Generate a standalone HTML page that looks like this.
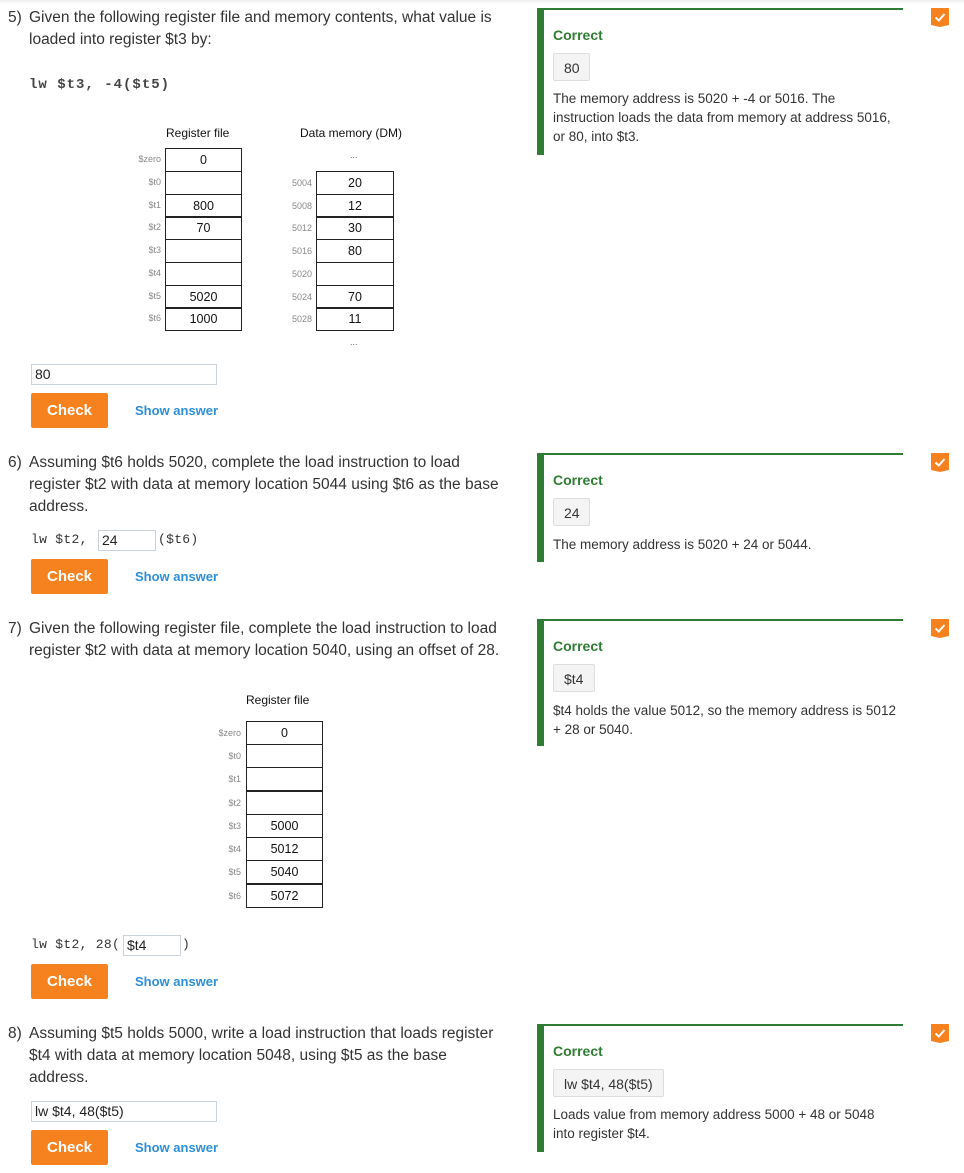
<!DOCTYPE html>
<html><head><meta charset="utf-8"><style>
body{margin:0;width:964px;height:1173px;position:relative;background:#fff;font-family:"Liberation Sans",sans-serif;color:#333;overflow:hidden}
.a{position:absolute;white-space:nowrap}
.q{font-size:15.5px;line-height:22px}
.mono{font-family:"Liberation Mono",monospace;font-size:13px;letter-spacing:0.3px;color:#333}
.inp{position:absolute;border:1px solid #c9d2d8;background:#fff;font-size:14px;line-height:18px;padding-left:3px;box-sizing:border-box;color:#222}
.btn{position:absolute;background:#f5811f;color:#fff;font-weight:bold;font-size:15px;text-align:center;border-radius:2px;width:77px;height:35px;line-height:35px}
.sa{position:absolute;color:#2d8fd6;font-weight:bold;font-size:13px}
.pan{position:absolute;left:537px;width:366px;border-top:2px solid #2e7d32;border-left:7px solid #2e7d32;box-sizing:border-box}
.cor{position:absolute;left:553px;color:#2e7d32;font-weight:bold;font-size:14px}
.box{position:absolute;left:553px;background:#f4f4f4;border:1px solid #ddd;border-radius:2px;height:28px;line-height:28px;font-size:14px;padding:0 10px;box-sizing:border-box;color:#333}
.ex{position:absolute;left:553px;font-size:13.5px;line-height:19px;white-space:nowrap}
.ic{position:absolute;left:931px;width:18px;height:19px}
.cell{position:absolute;border:1.5px solid #222;box-sizing:border-box;text-align:center;font-size:12.5px;color:#111}
.lbl{position:absolute;font-size:9px;color:#888;text-align:right;width:40px}
.lbl2{position:absolute;font-size:9px;color:#888}
.tt{position:absolute;font-size:12px;color:#111}
</style></head><body>
<div style="position:absolute;left:0;top:0;width:964px;height:4px;background:linear-gradient(#eee,#fff)"></div>

<!-- Q5 -->
<div class="a q" style="left:8px;top:7px">5)</div>
<div class="a q" style="left:29px;top:7px">Given the following register file and memory contents, what value is<br>loaded into register $t3 by:</div>
<div class="a mono" style="left:29px;top:77px;font-size:14px;letter-spacing:1px;font-weight:bold;color:#444">lw $t3, -4($t5)</div>
<div class="tt" style="left:166px;top:126px">Register file</div>
<div class="tt" style="left:300px;top:126px">Data memory (DM)</div>
<div class="tt" style="left:350px;top:150px;font-size:9px;color:#666">...</div>
<div class="tt" style="left:350px;top:337px;font-size:9px;color:#666">...</div>

<div class="cell" style="left:165px;top:148px;width:77px;height:24px;line-height:22px">0</div>
<div class="cell" style="left:165px;top:171px;width:77px;height:24px;line-height:22px"></div>
<div class="cell" style="left:165px;top:194px;width:77px;height:24px;line-height:22px">800</div>
<div class="cell" style="left:165px;top:216px;width:77px;height:24px;line-height:22px">70</div>
<div class="cell" style="left:165px;top:239px;width:77px;height:24px;line-height:22px"></div>
<div class="cell" style="left:165px;top:262px;width:77px;height:24px;line-height:22px"></div>
<div class="cell" style="left:165px;top:285px;width:77px;height:24px;line-height:22px">5020</div>
<div class="cell" style="left:165px;top:307px;width:77px;height:24px;line-height:22px">1000</div>
<div class="lbl" style="left:121px;top:154px">$zero</div>
<div class="lbl" style="left:121px;top:177px">$t0</div>
<div class="lbl" style="left:121px;top:200px">$t1</div>
<div class="lbl" style="left:121px;top:222px">$t2</div>
<div class="lbl" style="left:121px;top:245px">$t3</div>
<div class="lbl" style="left:121px;top:268px">$t4</div>
<div class="lbl" style="left:121px;top:291px">$t5</div>
<div class="lbl" style="left:121px;top:313px">$t6</div>

<div class="cell" style="left:316px;top:171px;width:78px;height:24px;line-height:22px">20</div>
<div class="cell" style="left:316px;top:194px;width:78px;height:24px;line-height:22px">12</div>
<div class="cell" style="left:316px;top:216px;width:78px;height:24px;line-height:22px">30</div>
<div class="cell" style="left:316px;top:239px;width:78px;height:24px;line-height:22px">80</div>
<div class="cell" style="left:316px;top:262px;width:78px;height:24px;line-height:22px"></div>
<div class="cell" style="left:316px;top:285px;width:78px;height:24px;line-height:22px">70</div>
<div class="cell" style="left:316px;top:307px;width:78px;height:24px;line-height:22px">11</div>
<div class="lbl2" style="left:292px;top:178px">5004</div>
<div class="lbl2" style="left:292px;top:201px">5008</div>
<div class="lbl2" style="left:292px;top:223px">5012</div>
<div class="lbl2" style="left:292px;top:246px">5016</div>
<div class="lbl2" style="left:292px;top:269px">5020</div>
<div class="lbl2" style="left:292px;top:292px">5024</div>
<div class="lbl2" style="left:292px;top:314px">5028</div>

<div class="inp" style="left:31px;top:364px;width:186px;height:21px">80</div>
<div class="btn" style="left:31px;top:393px">Check</div>
<div class="sa" style="left:135px;top:403px">Show answer</div>

<div class="pan" style="top:8px;height:147px"></div>
<div class="cor" style="top:27px">Correct</div>
<div class="box" style="top:53px;width:37px">80</div>
<div class="ex" style="top:89px">The memory address is 5020 + -4 or 5016. The<br>instruction loads the data from memory at address 5016,<br>or 80, into $t3.</div>

<!-- Q6 -->
<div class="a q" style="left:8px;top:452px">6)</div>
<div class="a q" style="left:29px;top:452px">Assuming $t6 holds 5020, complete the load instruction to load<br>register $t2 with data at memory location 5044 using $t6 as the base<br>address.</div>
<div class="a mono" style="left:31px;top:532px">lw $t2,</div>
<div class="inp" style="left:98px;top:530px;width:58px;height:21px">24</div>
<div class="a mono" style="left:158px;top:532px">($t6)</div>
<div class="btn" style="left:31px;top:559px">Check</div>
<div class="sa" style="left:135px;top:569px">Show answer</div>

<div class="pan" style="top:453px;height:109px"></div>
<div class="cor" style="top:472px">Correct</div>
<div class="box" style="top:498px;width:37px">24</div>
<div class="ex" style="top:535px">The memory address is 5020 + 24 or 5044.</div>

<!-- Q7 -->
<div class="a q" style="left:8px;top:618px">7)</div>
<div class="a q" style="left:29px;top:618px">Given the following register file, complete the load instruction to load<br>register $t2 with data at memory location 5040, using an offset of 28.</div>
<div class="tt" style="left:246px;top:693px">Register file</div>
<div class="cell" style="left:246px;top:721px;width:77px;height:24px;line-height:22px">0</div>
<div class="cell" style="left:246px;top:744px;width:77px;height:24px;line-height:22px"></div>
<div class="cell" style="left:246px;top:767px;width:77px;height:24px;line-height:22px"></div>
<div class="cell" style="left:246px;top:791px;width:77px;height:24px;line-height:22px"></div>
<div class="cell" style="left:246px;top:814px;width:77px;height:24px;line-height:22px">5000</div>
<div class="cell" style="left:246px;top:837px;width:77px;height:24px;line-height:22px">5012</div>
<div class="cell" style="left:246px;top:860px;width:77px;height:24px;line-height:22px">5040</div>
<div class="cell" style="left:246px;top:884px;width:77px;height:24px;line-height:22px">5072</div>
<div class="lbl" style="left:201px;top:728px">$zero</div>
<div class="lbl" style="left:201px;top:751px">$t0</div>
<div class="lbl" style="left:201px;top:774px">$t1</div>
<div class="lbl" style="left:201px;top:798px">$t2</div>
<div class="lbl" style="left:201px;top:821px">$t3</div>
<div class="lbl" style="left:201px;top:844px">$t4</div>
<div class="lbl" style="left:201px;top:867px">$t5</div>
<div class="lbl" style="left:201px;top:891px">$t6</div>
<div class="a mono" style="left:31px;top:937px">lw $t2, 28(</div>
<div class="inp" style="left:123px;top:935px;width:58px;height:21px">$t4</div>
<div class="a mono" style="left:182px;top:937px">)</div>
<div class="btn" style="left:31px;top:964px">Check</div>
<div class="sa" style="left:135px;top:974px">Show answer</div>

<div class="pan" style="top:619px;height:127px"></div>
<div class="cor" style="top:638px">Correct</div>
<div class="box" style="top:664px;width:42px">$t4</div>
<div class="ex" style="top:701px">$t4 holds the value 5012, so the memory address is 5012<br>+ 28 or 5040.</div>

<!-- Q8 -->
<div class="a q" style="left:8px;top:1023px">8)</div>
<div class="a q" style="left:29px;top:1023px">Assuming $t5 holds 5000, write a load instruction that loads register<br>$t4 with data at memory location 5048, using $t5 as the base<br>address.</div>
<div class="inp" style="left:31px;top:1101px;width:186px;height:21px">lw $t4, 48($t5)</div>
<div class="btn" style="left:31px;top:1130px">Check</div>
<div class="sa" style="left:135px;top:1140px">Show answer</div>

<div class="pan" style="top:1024px;height:128px"></div>
<div class="cor" style="top:1043px">Correct</div>
<div class="box" style="top:1069px;width:111px">lw $t4, 48($t5)</div>
<div class="ex" style="top:1105px">Loads value from memory address 5000 + 48 or 5048<br>into register $t4.</div>

<!-- icons -->
<svg class="ic" style="top:8px" viewBox="0 0 18 19"><path d="M0 0H18V17L9 19L0 17Z" fill="#f5811f"/><path d="M4.5 9.5L7.8 12.5L13.5 6" stroke="#fff" stroke-width="2" fill="none"/></svg>
<svg class="ic" style="top:453px" viewBox="0 0 18 19"><path d="M0 0H18V17L9 19L0 17Z" fill="#f5811f"/><path d="M4.5 9.5L7.8 12.5L13.5 6" stroke="#fff" stroke-width="2" fill="none"/></svg>
<svg class="ic" style="top:619px" viewBox="0 0 18 19"><path d="M0 0H18V17L9 19L0 17Z" fill="#f5811f"/><path d="M4.5 9.5L7.8 12.5L13.5 6" stroke="#fff" stroke-width="2" fill="none"/></svg>
<svg class="ic" style="top:1024px" viewBox="0 0 18 19"><path d="M0 0H18V17L9 19L0 17Z" fill="#f5811f"/><path d="M4.5 9.5L7.8 12.5L13.5 6" stroke="#fff" stroke-width="2" fill="none"/></svg>
</body></html>
